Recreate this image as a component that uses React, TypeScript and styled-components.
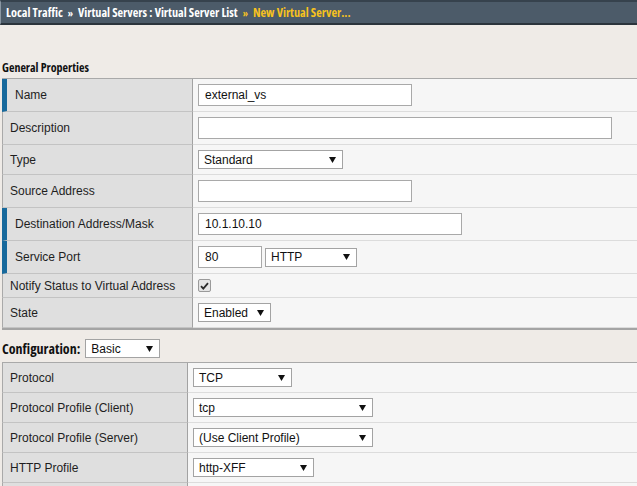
import React from 'react';
import styled, { createGlobalStyle } from 'styled-components';

const GlobalStyle = createGlobalStyle`
    html, body {
        margin: 0;
        padding: 0;
        background: #efebe7;
        overflow: hidden;
    }
    body {
        font-family: "Liberation Sans", Arial, sans-serif;
        font-size: 12px;
        color: #1e1e1e;
    }
`;

const narrowBold = `
    font-family: "Open Sans", "Liberation Sans", sans-serif;
    font-stretch: 75%;
    font-weight: bold;
`;

const Page = styled.div`
    width: 637px;
    height: 486px;
    overflow: hidden;
`;

const Breadcrumb = styled.div`
    ${narrowBold}
    display: flex;
    align-items: center;
    gap: 5px;
    height: 21px;
    padding-left: 5px;
    background: #4c5b69;
    border-top: 2px solid #36424d;
    border-bottom: 2px solid #2b343c;
    border-left: 1px solid #8b97a2;
    font-size: 12.2px;
    color: #ffffff;
    white-space: nowrap;
`;

const Crumb = styled.span<{ $current?: boolean }>`
    color: ${p => (p.$current ? '#f7c21e' : '#ffffff')};
`;

const Sep = styled.span<{ $current?: boolean }>`
    font-size: 10px;
    color: ${p => (p.$current ? '#f7c21e' : '#ffffff')};
`;

const SectionTitle = styled.div`
    ${narrowBold}
    margin: 36px 0 3px 2px;
    height: 14px;
    line-height: 14px;
    font-size: 12px;
    color: #111;
`;

const ConfigBar = styled.div`
    ${narrowBold}
    display: flex;
    align-items: center;
    gap: 5px;
    margin: 9px 0 4px 2px;
    font-size: 14px;
    color: #111;
`;

const Table = styled.div<{ $labelWidth: number }>`
    display: grid;
    grid-template-columns: ${p => p.$labelWidth}px 1fr;
    width: calc(100% + 10px);
    margin-left: 2px;
    border-top: 1px solid #a9a9a9;
    border-bottom: 2px solid #a4a4a4;
`;

const LabelCell = styled.div<{ $required?: boolean }>`
    display: flex;
    align-items: center;
    padding-left: ${p => (p.$required ? 8 : 7)}px;
    background: #dfdfdf;
    border-left: ${p => (p.$required ? '5px solid #17699c' : '1px solid #a9a9a9')};
    border-right: 1px solid #a2a2a2;
    border-bottom: 1px solid #c3c3c3;
    color: #1e1e1e;
    white-space: nowrap;
`;

const ValueCell = styled.div`
    display: flex;
    align-items: center;
    gap: 3px;
    padding: 5px 0 5px 5px;
    background: #f6f6f6;
    border-bottom: 1px solid #dcdcdc;
`;

const TextInput = styled.div<{ $width: number }>`
    box-sizing: border-box;
    display: flex;
    align-items: center;
    width: ${p => p.$width}px;
    height: 22px;
    padding-left: 6px;
    background: #ffffff;
    border: 1px solid #a9a9a9;
    color: #111;
`;

const SelectBox = styled.div<{ $width: number }>`
    box-sizing: border-box;
    display: flex;
    align-items: center;
    justify-content: space-between;
    width: ${p => p.$width}px;
    height: 19px;
    padding: 0 6px 0 5px;
    background: #ffffff;
    border: 1px solid #a3a3a3;
    font-family: "Liberation Sans", Arial, sans-serif;
    font-stretch: normal;
    font-weight: normal;
    font-size: 12px;
    color: #111;
`;

const Checkbox = styled.div`
    box-sizing: border-box;
    display: flex;
    align-items: center;
    justify-content: center;
    width: 13px;
    height: 13px;
    border: 1px solid #9a9a9a;
    border-radius: 2px;
    background: #e4e4e4;
`;

const Arrow = () => (
    <svg width="7" height="6" viewBox="0 0 7 6">
        <path d="M0 0h7L3.5 6z" fill="#111" />
    </svg>
);

const Select: React.FC<{ width: number; value: string }> = ({ width, value }) => (
    <SelectBox $width={width}>
        <span>{value}</span>
        <Arrow />
    </SelectBox>
);

type Row = { label: string; required?: boolean; field: React.ReactNode };

const general: Row[] = [
    { label: 'Name', required: true, field: <TextInput $width={214}>external_vs</TextInput> },
    { label: 'Description', field: <TextInput $width={414} /> },
    { label: 'Type', field: <Select width={145} value="Standard" /> },
    { label: 'Source Address', field: <TextInput $width={214} /> },
    { label: 'Destination Address/Mask', required: true, field: <TextInput $width={264}>10.1.10.10</TextInput> },
    {
        label: 'Service Port',
        required: true,
        field: (
            <>
                <TextInput $width={64}>80</TextInput>
                <Select width={92} value="HTTP" />
            </>
        ),
    },
    {
        label: 'Notify Status to Virtual Address',
        field: (
            <Checkbox>
                <svg width="9" height="8" viewBox="0 0 9 8">
                    <path d="M1 4.2l2.3 2.4L8 1.2" stroke="#2a2a2a" strokeWidth="1.8" fill="none" />
                </svg>
            </Checkbox>
        ),
    },
    { label: 'State', field: <Select width={73} value="Enabled" /> },
];

const config: Row[] = [
    { label: 'Protocol', field: <Select width={99} value="TCP" /> },
    { label: 'Protocol Profile (Client)', field: <Select width={180} value="tcp" /> },
    { label: 'Protocol Profile (Server)', field: <Select width={180} value="(Use Client Profile)" /> },
    { label: 'HTTP Profile', field: <Select width={121} value="http-XFF" /> },
    { label: '\u00a0', field: <Select width={99} value={'\u00a0'} /> },
];

const PropertyTable: React.FC<{ rows: Row[]; labelWidth: number }> = ({ rows, labelWidth }) => (
    <Table $labelWidth={labelWidth}>
        {rows.map((r, i) => (
            <React.Fragment key={i}>
                <LabelCell $required={r.required}>{r.label}</LabelCell>
                <ValueCell>{r.field}</ValueCell>
            </React.Fragment>
        ))}
    </Table>
);

export default function App() {
    return (
        <Page>
            <GlobalStyle />
            <Breadcrumb>
                <Crumb>Local Traffic</Crumb>
                <Sep>»</Sep>
                <Crumb>Virtual Servers : Virtual Server List</Crumb>
                <Sep $current>»</Sep>
                <Crumb $current>New Virtual Server...</Crumb>
            </Breadcrumb>

            <SectionTitle>General Properties</SectionTitle>
            <PropertyTable rows={general} labelWidth={191} />

            <ConfigBar>
                Configuration:
                <Select width={75} value="Basic" />
            </ConfigBar>
            <PropertyTable rows={config} labelWidth={186} />
        </Page>
    );
}
